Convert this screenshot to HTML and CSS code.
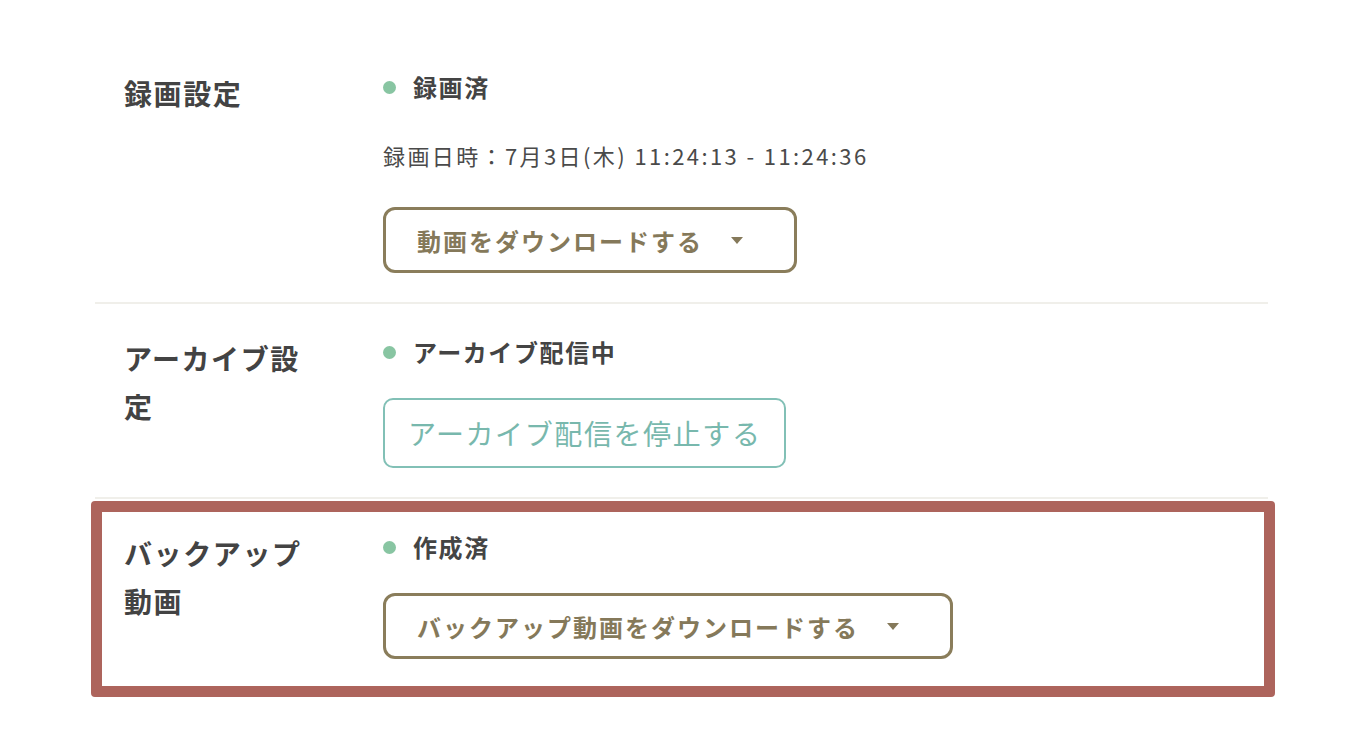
FILE: index.html
```html
<!DOCTYPE html>
<html lang="ja">
<head>
<meta charset="utf-8">
<meta name="viewport" content="width=device-width, initial-scale=1">
<title>配信設定</title>
<link rel="stylesheet" href="styles.css">
</head>
<body>
<div class="settings">
  <div class="row">
    <div class="row-label">録画設定</div>
    <div class="row-body">
      <div class="status"><span class="dot"></span>録画済</div>
      <div class="date">録画日時：7月3日(木) 11:24:13 - 11:24:36</div>
      <button class="btn-download" type="button">動画をダウンロードする<span class="caret"></span></button>
    </div>
  </div>
  <div class="row">
    <div class="row-label">アーカイブ設定</div>
    <div class="row-body">
      <div class="status"><span class="dot"></span>アーカイブ配信中</div>
      <button class="btn-stop" type="button">アーカイブ配信を停止する</button>
    </div>
  </div>
  <div class="row row-last">
    <div class="row-label">バックアップ動画</div>
    <div class="row-body">
      <div class="status"><span class="dot"></span>作成済</div>
      <button class="btn-download" type="button">バックアップ動画をダウンロードする<span class="caret"></span></button>
    </div>
    <div class="highlight"></div>
  </div>
</div>
</body>
</html>
```

FILE: styles.css
```css
body {
	margin: 0;
	background: #fff;
	font-family: "Noto Sans CJK JP", "Noto Sans", sans-serif;
	color: #444;
	letter-spacing: 1.6px;
}
.settings {
	width: 1173px;
	margin-left: 95px;
	padding-top: 39px;
	padding-bottom: 45px;
}
.row {
	display: flex;
	position: relative;
	padding: 30px 0 29px 29px;
	border-bottom: 2px solid #f0efea;
}
.row-last {
	border-bottom: none;
}
.row-label {
	width: 190px;
	margin-right: 69px;
	font-size: 28px;
	line-height: 48px;
	font-weight: bold;
	color: #434343;
}
.row-body {
	display: flex;
	flex-direction: column;
	align-items: flex-start;
}
.status {
	display: flex;
	align-items: center;
	font-size: 24px;
	line-height: 36px;
	font-weight: bold;
	color: #444;
}
.dot {
	width: 13px;
	height: 13px;
	border-radius: 50%;
	background: #88c5a2;
	margin-right: 17px;
}
.date {
	margin-top: 32px;
	font-size: 22px;
	line-height: 36px;
	letter-spacing: 2.4px;
	color: #4a4a4a;
}
.date + .btn-download {
	margin-top: 34px;
}
button {
	font-family: inherit;
	letter-spacing: inherit;
	cursor: pointer;
	background: #fff;
}
.btn-download {
	display: flex;
	align-items: center;
	height: 66px;
	margin-top: 28px;
	padding: 0 51px 0 31px;
	border: 3px solid #8a7d5b;
	border-radius: 12px;
	font-size: 24px;
	letter-spacing: 2px;
	font-weight: bold;
	color: #85795a;
}
.caret {
	width: 0;
	height: 0;
	margin-left: 28px;
	border-left: 6px solid transparent;
	border-right: 6px solid transparent;
	border-top: 7px solid #85795a;
}
.btn-stop {
	height: 70px;
	margin-top: 28px;
	padding: 0 22px 0 23px;
	border: 2px solid #82c0b6;
	border-radius: 10px;
	font-size: 28px;
	color: #78b8ad;
}
.highlight {
	position: absolute;
	top: 2px;
	left: -4px;
	right: -7px;
	bottom: -9px;
	border: 11px solid #ad645c;
	border-radius: 4px;
	pointer-events: none;
}
```
